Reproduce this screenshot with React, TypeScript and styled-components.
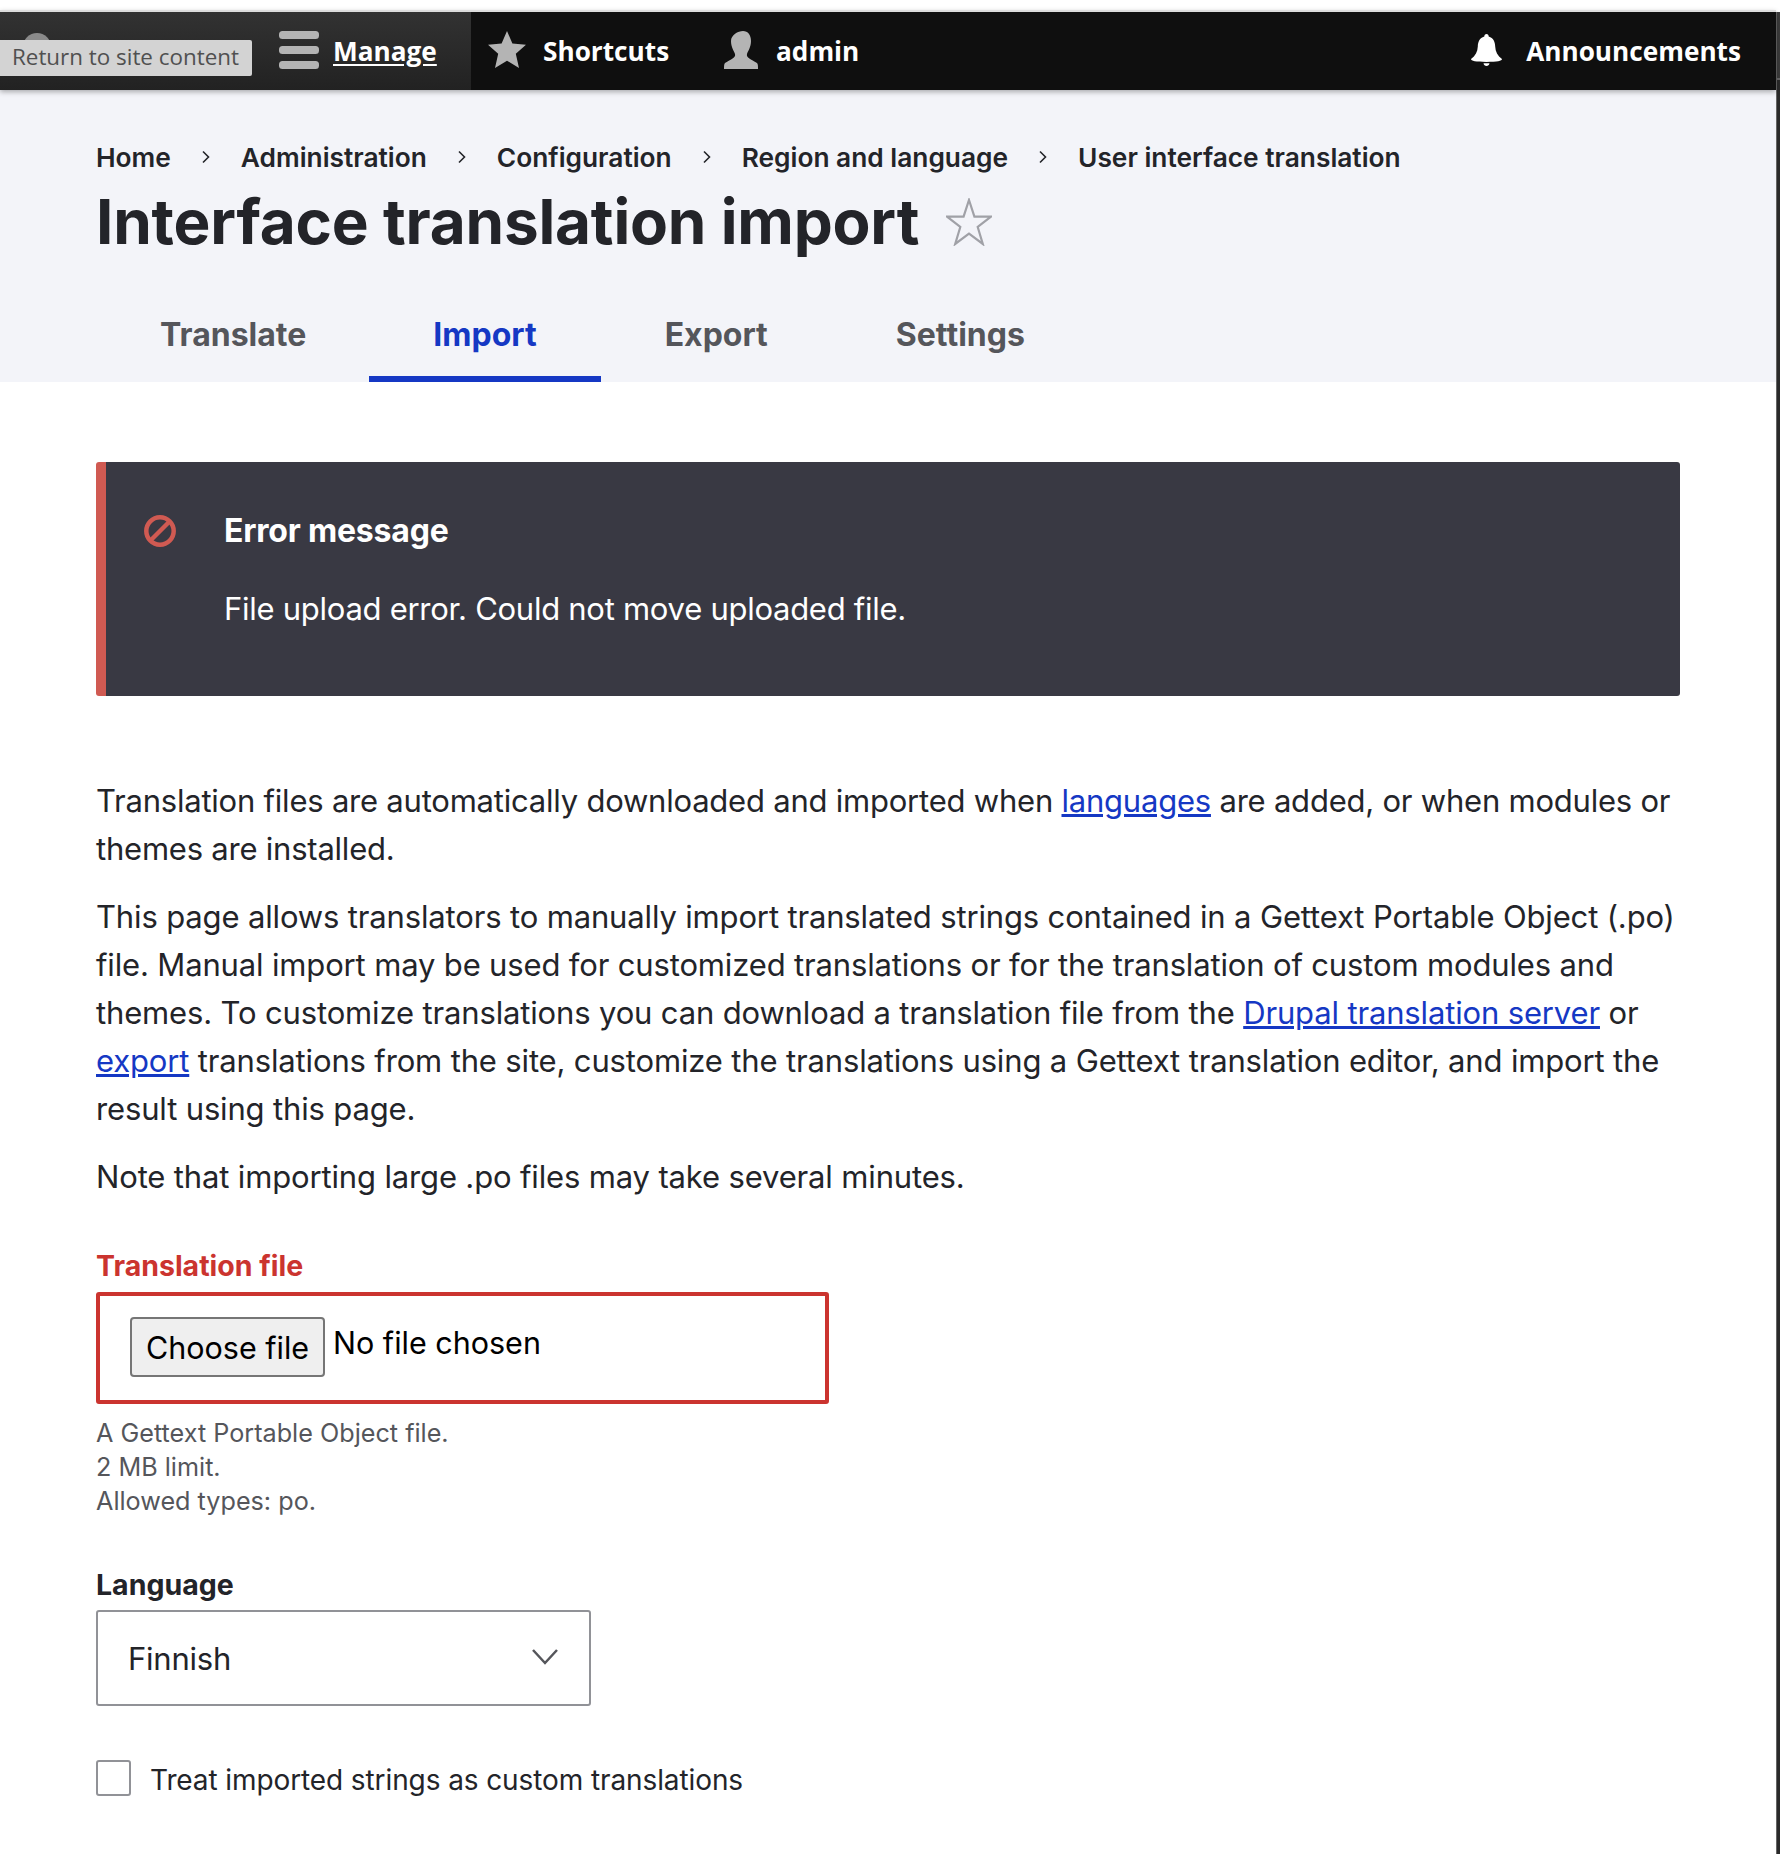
import { FunctionComponent } from "react";
import styled, { createGlobalStyle } from "styled-components";

const GlobalStyle = createGlobalStyle`
  html, body {
    margin: 0;
    padding: 0;
    background: #fff;
    font-family: Inter, "Liberation Sans", sans-serif;
    color: #232429;
  }
  * {
    box-sizing: border-box;
  }
`;

const Page = styled.div`
  width: 1780px;
  height: 1854px;
  padding: 10px 4px 0 0;
  position: relative;
  overflow: hidden;
`;

const ScrollEdge = styled.div`
  position: absolute;
  top: 12px;
  right: 0;
  bottom: 0;
  width: 4px;
  border-left: 1px solid #666;
  background: linear-gradient(to bottom, #3c3c3c 66px, #666 66px, #666 68px, #2a2a2a 68px);
`;

const Toolbar = styled.nav`
  position: relative;
  z-index: 2;
  height: 80px;
  display: flex;
  align-items: center;
  background: #0f0f0f;
  border-top: 2px solid #dcdcdc;
  box-shadow: 0 2px 5px rgba(0, 0, 0, 0.3);
  font-family: "Open Sans", "Noto Sans", sans-serif;
  font-weight: 700;
  font-size: 26.2px;
  color: #fff;
`;

const ManageTray = styled.div`
  width: 471px;
  height: 100%;
  flex: none;
  display: flex;
  align-items: center;
  padding: 0 0 2px 279px;
  gap: 14px;
  background: linear-gradient(to bottom, #323232, #222);
`;

const ToolbarLabel = styled.span<{ $link?: boolean }>`
  margin-top: 2px;
  ${(props) =>
    props.$link ? "text-decoration: underline; text-underline-offset: 3px;" : ""}
`;

const ToolbarItem = styled.div<{ $gap: number; $width?: number }>`
  display: flex;
  align-items: center;
  gap: ${(props) => props.$gap}px;
  margin-bottom: 2px;
  ${(props) => (props.$width ? `width: ${props.$width}px;` : "")}
`;

const ToolbarRight = styled.div`
  margin-left: auto;
  padding-right: 35px;
`;

const SiteDot = styled.div`
  position: absolute;
  left: 23px;
  top: 21px;
  width: 28px;
  height: 28px;
  border-radius: 50%;
  background: #8a8a8a;
`;

const ReturnTip = styled.div`
  position: absolute;
  left: 0;
  top: 28px;
  width: 252px;
  height: 36px;
  border-radius: 0 2px 2px 0;
  background: #d3d3d3;
  color: #505050;
  font-family: "Open Sans", "Noto Sans", sans-serif;
  font-weight: 400;
  font-size: 22.4px;
  line-height: 34px;
  padding-left: 12px;
  white-space: nowrap;
`;

const Header = styled.header`
  height: 292px;
  padding: 38px 0 0 96px;
  background: #f3f4f9;
`;

const Breadcrumb = styled.ol`
  list-style: none;
  margin: 0;
  padding: 0;
  height: 58px;
  display: flex;
  align-items: center;
  font-size: 26.3px;
  font-weight: 600;
  color: #232429;
  white-space: nowrap;
`;

const Crumb = styled.li`
  display: flex;
  align-items: center;
`;

const CrumbSep = styled.svg`
  width: 10px;
  height: 14px;
  margin: 0 30px;
`;

const TitleRow = styled.div`
  display: flex;
  align-items: center;
  gap: 27px;
  height: 72px;
`;

const Title = styled.h1`
  margin: 0;
  font-size: 62px;
  line-height: 72px;
  font-weight: 700;
  letter-spacing: -0.2px;
  white-space: nowrap;
`;

const Tabs = styled.div`
  display: flex;
  margin-top: 36px;
`;

const Tab = styled.div<{ $active?: boolean }>`
  height: 88px;
  padding: 0 64px 2px;
  display: flex;
  align-items: center;
  font-size: 32px;
  font-weight: 700;
  color: ${(props) => (props.$active ? "#1538c4" : "#55565b")};
  border-bottom: 6px solid ${(props) => (props.$active ? "#1538c4" : "transparent")};

  &:first-child {
    padding-right: 63px;
  }
`;

const Main = styled.main`
  padding: 80px 96px 0;
`;

const ErrorBox = styled.div`
  height: 234px;
  display: flex;
  border-radius: 3px;
  border-left: 10px solid #d05a52;
  background: #393943;
  color: #fff;
  padding: 32px 0 0 38px;
`;

const ErrorIcon = styled.svg`
  width: 32px;
  height: 32px;
  margin-top: 21px;
  flex: none;
`;

const ErrorBody = styled.div`
  margin-left: 48px;
  font-size: 32px;
`;

const ErrorTitle = styled.div`
  font-weight: 700;
  line-height: 46px;
  margin-top: 14px;
  letter-spacing: -0.2px;
`;

const ErrorText = styled.div`
  line-height: 46px;
  margin-top: 32px;
  font-size: 31px;
  letter-spacing: -0.27px;
`;

const Intro = styled.div`
  margin-top: 81px;
  font-size: 31px;
  line-height: 48px;
`;

const Para = styled.p<{ $tight?: boolean }>`
  margin: 0 0 20px;
  letter-spacing: ${(props) => (props.$tight ? "-0.22px" : "-0.15px")};
`;

const TextLink = styled.a`
  color: #1538c4;
  text-decoration: underline;
`;

const FieldLabel = styled.div<{ $error?: boolean }>`
  font-size: 28.5px;
  line-height: 36px;
  font-weight: 700;
  color: ${(props) => (props.$error ? "#cb342f" : "#232429")};
`;

const FileField = styled.div`
  margin-top: 47px;
`;

const FileBox = styled.div`
  width: 733px;
  height: 112px;
  margin-top: 8px;
  padding: 21px 0 0 30px;
  display: flex;
  border: 4px solid #cb342f;
  border-radius: 3px;
`;

const FileButton = styled.button`
  width: 195px;
  height: 60px;
  padding: 0;
  border: 2px solid #767676;
  border-radius: 4px;
  background: #efefef;
  color: #000;
  font-family: Inter, sans-serif;
  font-size: 30.5px;
`;

const FileName = styled.span`
  margin: 2px 0 0 8px;
  font-family: Inter, sans-serif;
  font-size: 30.5px;
  line-height: 48px;
  color: #000;
`;

const Help = styled.div`
  margin-top: 12px;
  font-size: 25.2px;
  line-height: 34px;
  color: #55565b;
`;

const LanguageField = styled.div`
  margin-top: 49px;
`;

const SelectWrap = styled.div`
  position: relative;
  width: 495px;
  margin-top: 7px;
`;

const Select = styled.select`
  width: 100%;
  height: 96px;
  padding: 0 30px;
  appearance: none;
  border: 2px solid #919297;
  border-radius: 3px;
  background: #fff;
  color: #232429;
  font-family: Inter, sans-serif;
  font-size: 31px;
  letter-spacing: -0.22px;
`;

const SelectChevron = styled.svg`
  position: absolute;
  right: 32px;
  top: 38px;
  width: 28px;
  height: 18px;
`;

const CheckRow = styled.label`
  display: flex;
  align-items: center;
  gap: 19px;
  margin-top: 52px;
  font-size: 28px;
  line-height: 36px;
  letter-spacing: -0.1px;
`;

const CheckBox = styled.input`
  width: 35px;
  height: 36px;
  margin: 0;
  appearance: none;
  border: 2px solid #919297;
  border-radius: 3px;
  background: #fff;
`;

const CheckText = styled.span`
  margin-top: 4px;
`;

const ToolbarIcon = styled.svg<{ $w: number; $h: number }>`
  width: ${(props) => props.$w}px;
  height: ${(props) => props.$h}px;
  flex: none;
`;

const crumbs = [
  "Home",
  "Administration",
  "Configuration",
  "Region and language",
  "User interface translation",
];

const tabs = ["Translate", "Import", "Export", "Settings"];

const App: FunctionComponent = () => (
  <Page>
    <GlobalStyle />
    <ScrollEdge />
    <Toolbar>
      <SiteDot />
      <ReturnTip>Return to site content</ReturnTip>
      <ManageTray>
        <ToolbarIcon $w={40} $h={38} viewBox="0 0 40 38" fill="#b4b4b4">
          <rect x="0" y="0" width="40" height="8" rx="3.500" />
          <rect x="0" y="15" width="40" height="8" rx="3.500" />
          <rect x="0" y="30" width="40" height="8" rx="3.500" />
        </ToolbarIcon>
        <ToolbarLabel $link>Manage</ToolbarLabel>
      </ManageTray>
      <ToolbarItem $gap={17} $width={253}>
        <ToolbarIcon
          $w={38}
          $h={38}
          viewBox="0 0 38 38"
          fill="#b4b4b4"
          style={{ marginLeft: 17 }}
        >
          <path d="M19 0l5.400 12.600L38 13.800l-10.200 9L31 37l-12-7.300L7 37l3.200-14.200L0 13.800l13.600-1.200z" />
        </ToolbarIcon>
        <ToolbarLabel>Shortcuts</ToolbarLabel>
      </ToolbarItem>
      <ToolbarItem $gap={14}>
        <ToolbarIcon $w={38} $h={38} viewBox="0 0 38 38" fill="#b4b4b4">
          <path d="M19 0c5 0 8 4 8 10 0 6-3 10-4 13-1 4 4 5 10 9 1 1 1 3 1 6H0c0-3 0-5 1-6 6-4 11-5 10-9-1-3-4-7-4-13C7 4 14 0 19 0z" />
        </ToolbarIcon>
        <ToolbarLabel>admin</ToolbarLabel>
      </ToolbarItem>
      <ToolbarRight>
        <ToolbarItem $gap={24}>
          <ToolbarIcon $w={31} $h={32} viewBox="0 0 31 32" fill="#fff">
            <path d="M15.500 0c1.400 0 2.200 1 2.200 2.400 4.800 1.400 6.300 5.300 6.500 10.100.2 5.300 2.400 9.500 6.800 12.600 0 1.800-4.800 2.900-15.500 2.900S0 26.900 0 25.100c4.400-3.100 6.600-7.300 6.800-12.600C7 7.700 8.500 3.800 13.300 2.400c0-1.400.8-2.400 2.200-2.400z" />
            <path d="M12.500 29.200c1 .2 5 .2 6 0-.3 1.700-1.500 2.800-3 2.800s-2.700-1.100-3-2.800z" />
          </ToolbarIcon>
          <ToolbarLabel>Announcements</ToolbarLabel>
        </ToolbarItem>
      </ToolbarRight>
    </Toolbar>

    <Header>
      <Breadcrumb>
        {crumbs.map((crumb, i) => (
          <Crumb key={crumb}>
            {i > 0 && (
              <CrumbSep viewBox="0 0 10 14" fill="none" stroke="#232429" strokeWidth="1.6">
                <path d="M2 1.500L7.500 7 2 12.500" />
              </CrumbSep>
            )}
            {crumb}
          </Crumb>
        ))}
      </Breadcrumb>
      <TitleRow>
        <Title>Interface translation import</Title>
        <svg width="46" height="48" viewBox="0 0 46 48" fill="none" stroke="#a0a1a7" strokeWidth="2.200">
          <path d="M23 2l5.400 16.600H45L31.700 29l5.100 17L23 35.700 9.200 46l5.100-17L1 18.600h16.600z" />
        </svg>
      </TitleRow>
      <Tabs>
        {tabs.map((tab) => (
          <Tab key={tab} $active={tab === "Import"}>
            {tab}
          </Tab>
        ))}
      </Tabs>
    </Header>

    <Main>
      <ErrorBox>
        <ErrorIcon viewBox="0 0 32 32" fill="none" stroke="#d05a52" strokeWidth="4.500">
          <circle cx="16" cy="16" r="13.700" />
          <path d="M6.500 25.500L25.500 6.500" />
        </ErrorIcon>
        <ErrorBody>
          <ErrorTitle>Error message</ErrorTitle>
          <ErrorText>File upload error. Could not move uploaded file.</ErrorText>
        </ErrorBody>
      </ErrorBox>

      <Intro>
        <Para $tight>
          Translation files are automatically downloaded and imported when{" "}
          <TextLink>languages</TextLink> are added, or when modules or themes are
          installed.
        </Para>
        <Para>
          This page allows translators to manually import translated strings
          contained in a Gettext Portable Object (.po) file. Manual import may be
          used for customized translations or for the translation of custom
          modules and themes. To customize translations you can download a
          translation file from the <TextLink>Drupal translation server</TextLink>{" "}
          or <TextLink>export</TextLink> translations from the site, customize the
          translations using a Gettext translation editor, and import the result
          using this page.
        </Para>
        <Para>Note that importing large .po files may take several minutes.</Para>
      </Intro>

      <FileField>
        <FieldLabel $error>Translation file</FieldLabel>
        <FileBox>
          <FileButton>Choose file</FileButton>
          <FileName>No file chosen</FileName>
        </FileBox>
      </FileField>
      <Help>
        A Gettext Portable Object file.
        <br />
        2 MB limit.
        <br />
        Allowed types: po.
      </Help>

      <LanguageField>
        <FieldLabel>Language</FieldLabel>
        <SelectWrap>
          <Select defaultValue="fi">
            <option value="fi">Finnish</option>
          </Select>
          <SelectChevron viewBox="0 0 28 18" fill="none" stroke="#55565b" strokeWidth="2.500">
            <path d="M2 2l12 13L26 2" />
          </SelectChevron>
        </SelectWrap>
      </LanguageField>

      <CheckRow>
        <CheckBox type="checkbox" />
        <CheckText>Treat imported strings as custom translations</CheckText>
      </CheckRow>
    </Main>
  </Page>
);

export default App;
